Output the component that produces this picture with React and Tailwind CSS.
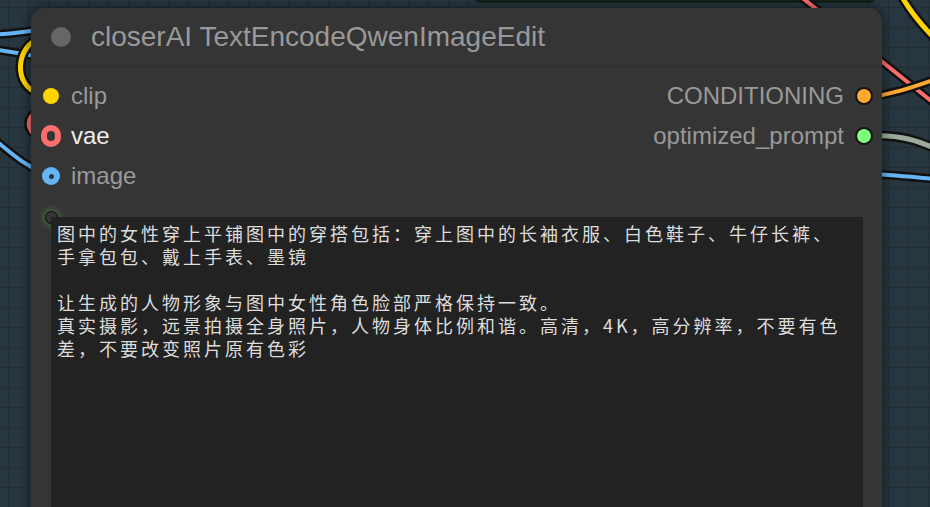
import React from 'react';

const inputs = [
  { name: 'clip', kind: 'fill', color: '#FFD500', text: 'text-[#999]' },
  { name: 'vae', kind: 'ring', color: '#FF6E6E', text: 'text-[#eee]' },
  { name: 'image', kind: 'dot', color: '#64B5F6', text: 'text-[#999]' },
];

const outputs = [
  { name: 'CONDITIONING', color: '#FFA931' },
  { name: 'optimized_prompt', color: '#7CFF7C' },
];

const promptText = `图中的女性穿上平铺图中的穿搭包括：穿上图中的长袖衣服、白色鞋子、牛仔长裤、
手拿包包、戴上手表、墨镜

让生成的人物形象与图中女性角色脸部严格保持一致。
真实摄影，远景拍摄全身照片，人物身体比例和谐。高清，4K，高分辨率，不要有色
差，不要改变照片原有色彩`;

// slot marker on the left side
const InputDot = ({ kind, color }) => {
  if (kind === 'ring') {
    return (
      <span
        className="block w-[22px] h-[22px] rounded-full border-[6px] bg-[#353535]"
        style={{ borderColor: color }}
      />
    );
  }
  if (kind === 'dot') {
    return (
      <span
        className="flex items-center justify-center w-[18px] h-[18px] rounded-full"
        style={{ backgroundColor: color }}
      >
        <span className="block w-[5px] h-[5px] rounded-full bg-[#353535]" />
      </span>
    );
  }
  return <span className="block w-[16px] h-[16px] rounded-full" style={{ backgroundColor: color }} />;
};

const Wires = () => (
  <svg className="absolute inset-0" width="930" height="507" viewBox="0 0 930 507">
    <defs>
      <pattern id="grid" width="20" height="20" patternUnits="userSpaceOnUse" x="8" y="7">
        <path d="M0 0 H20 M0 0 V20" stroke="#222e37" strokeWidth="2" fill="none" />
      </pattern>
    </defs>
    <rect width="930" height="507" fill="#283640" />
    <rect width="930" height="507" fill="url(#grid)" />

    {/* bottom edge of the node above */}
    <rect x="473" y="-20" width="404" height="23" rx="8" fill="#14201a" />

    <g fill="none" strokeLinecap="round">
      {/* left side */}
      <path d="M-10 35 C 10 34, 25 32, 45 29" stroke="#111" strokeWidth="9" />
      <path d="M-10 35 C 10 34, 25 32, 45 29" stroke="#64B5F6" strokeWidth="4" />
      <path d="M-10 49 C 10 51, 25 54, 45 58" stroke="#111" strokeWidth="9" />
      <path d="M-10 49 C 10 51, 25 54, 45 58" stroke="#64B5F6" strokeWidth="4" />
      <path d="M40 38 C 16 46, 12 86, 40 94" stroke="#111" strokeWidth="10" />
      <path d="M40 38 C 16 46, 12 86, 40 94" stroke="#FFD500" strokeWidth="5" />
      <path d="M40 110 C 26 116, 24 130, 40 138" stroke="#111" strokeWidth="9" />
      <path d="M40 110 C 26 116, 24 130, 40 138" stroke="#FF6E6E" strokeWidth="4" />
      <path d="M-10 136 C 8 150, 20 163, 45 174" stroke="#111" strokeWidth="9" />
      <path d="M-10 136 C 8 150, 20 163, 45 174" stroke="#64B5F6" strokeWidth="4" />

      {/* right side */}
      <path d="M898 -10 C 908 8, 918 22, 940 44" stroke="#111" strokeWidth="10" />
      <path d="M898 -10 C 908 8, 918 22, 940 44" stroke="#FFD500" strokeWidth="5" />
      <path d="M795 -8 L 945 112" stroke="#111" strokeWidth="9" />
      <path d="M795 -8 L 945 112" stroke="#FF6E6E" strokeWidth="4" />
      <path d="M870 97 C 895 94, 915 86, 945 76" stroke="#111" strokeWidth="9" />
      <path d="M870 97 C 895 94, 915 86, 945 76" stroke="#FFA931" strokeWidth="4" />
      <path d="M870 136 C 900 134, 920 141, 945 153" stroke="#111" strokeWidth="10" />
      <path d="M870 136 C 900 134, 920 141, 945 153" stroke="#9BAA9B" strokeWidth="5" />
      <path d="M870 174 C 895 175, 915 177, 945 180" stroke="#111" strokeWidth="9" />
      <path d="M870 174 C 895 175, 915 177, 945 180" stroke="#64B5F6" strokeWidth="4" />
    </g>
  </svg>
);

const App = () => {
  return (
    <div className="relative w-[930px] h-[507px] overflow-hidden bg-[#283640] font-['Liberation_Sans',Arial,sans-serif]">
      <Wires />

      <div className="absolute left-[31px] top-[8px] w-[851px] h-[540px] rounded-t-[14px] bg-[#353535] shadow-[0_0_10px_3px_rgba(0,0,0,0.35)]">
        {/* title */}
        <div className="flex items-center h-[59px] pl-[20px] gap-[20px] border-b border-[#2c2c2c]">
          <span className="block w-[20px] h-[20px] rounded-full bg-[#666]" />
          <span className="text-[28px] leading-none text-[#999]">closerAI TextEncodeQwenImageEdit</span>
        </div>

        {/* slots */}
        <div className="flex justify-between pt-[9px]">
          <div className="flex flex-col">
            {inputs.map((s) => (
              <div key={s.name} className="flex items-center h-[40px] pl-[10px]">
                <span className="flex items-center justify-center w-[20px]">
                  <InputDot kind={s.kind} color={s.color} />
                </span>
                <span className={`ml-[10px] text-[24px] leading-none ${s.text}`}>{s.name}</span>
              </div>
            ))}
          </div>
          <div className="flex flex-col items-end">
            {outputs.map((s) => (
              <div key={s.name} className="flex items-center h-[40px] pr-[8px]">
                <span className="mr-[10px] text-[24px] leading-none text-[#999]">{s.name}</span>
                <span className="flex items-center justify-center w-[20px]">
                  <span
                    className="block w-[18px] h-[18px] rounded-full border-2 border-[#111]"
                    style={{ backgroundColor: s.color }}
                  />
                </span>
              </div>
            ))}
          </div>
        </div>

        {/* prompt widget */}
        <div className="relative mt-[21px] ml-[20px] mr-[19px]">
          <span className="absolute -left-[6px] -top-[6px] w-[13px] h-[13px] rounded-full border-[1.5px] border-[#0a0a0a] shadow-[0_0_6px_2px_rgba(90,170,90,0.45)]" />
          <div className="relative h-[300px] bg-[#222] pl-[6px] pt-[5px] whitespace-pre text-[18px] leading-[23px] tracking-[3px] text-[#ddd] font-['Noto_Sans_CJK_SC','Noto_Sans',sans-serif]">
            {promptText}
          </div>
        </div>
      </div>
    </div>
  );
};

export default App;
